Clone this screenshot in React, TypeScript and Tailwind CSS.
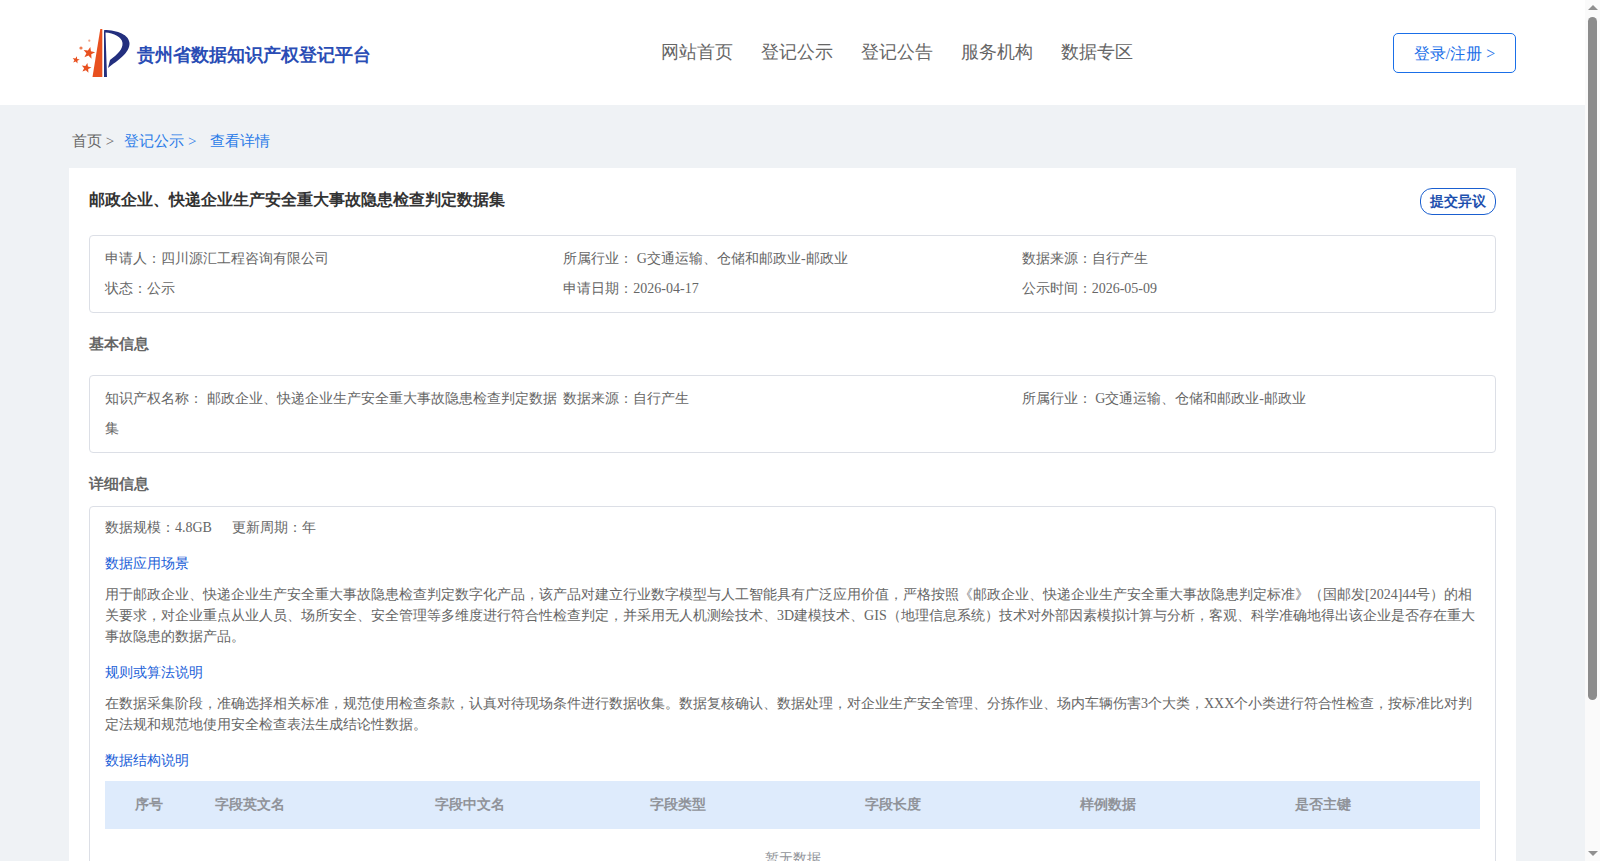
const columns = ["字段英文名", "字段中文名", "字段类型", "字段长度", "样例数据", "是否主键"];

function star(cx: number, cy: number, r: number) {
  const pts: string[] = [];
  for (let i = 0; i < 10; i++) {
    const rad = i % 2 === 0 ? r : r * 0.42;
    const a = ((i * 36 - 78) * Math.PI) / 180;
    pts.push(`${(cx + rad * Math.cos(a)).toFixed(2)},${(cy + rad * Math.sin(a)).toFixed(2)}`);
  }
  return pts.join(" ");
}

function Logo() {
  return (
    <svg width="60" height="52" viewBox="0 0 60 52" className="shrink-0">
      <path d="M28.300 2H30.300V50H20.500Z" fill="#e8501f" />
      <path d="M32 3C46 3 57 8 57.500 16C58 26 46 33 36 41L38 33C46 27 51 22 50.500 16C50 10 42 6 33 5.500Z" fill="#232f7e" />
      <path d="M32 3L33.500 5.500L35 50H32Z" fill="#232f7e" />
      <polygon points={star(17, 26, 6.2)} fill="#e8501f" />
      <polygon points={star(4, 33, 3.8)} fill="#e8501f" />
      <polygon points={star(14.300, 41, 5.2)} fill="#e8501f" />
      <circle cx="9" cy="21" r="1.600" fill="#ee7b52" />
      <circle cx="17.300" cy="13.700" r="1.100" fill="#f0a184" />
    </svg>
  );
}

function Header() {
  return (
    <header className="flex h-[105px] items-center bg-white pl-[72px] pr-[69px]">
      <div className="flex w-[589px] items-center gap-[5px]">
        <Logo />
        <span className="pt-[6px] text-[18px] font-bold text-[#2a4db5]">贵州省数据知识产权登记平台</span>
      </div>
      <nav className="flex flex-1 gap-[28px] text-[18px] text-[#666666]">
        <span>网站首页</span>
        <span>登记公示</span>
        <span>登记公告</span>
        <span>服务机构</span>
        <span>数据专区</span>
      </nav>
      <button className="h-[40px] w-[123px] rounded-[5px] border border-[#1a6fe8] pt-[2px] text-[16px] text-[#1a6fe8]">
        登录/注册 &gt;
      </button>
    </header>
  );
}

function Scrollbar() {
  return (
    <div className="fixed right-0 top-0 flex h-[861px] w-[15px] flex-col items-center bg-[#fafafa]">
      <div className="mt-[5px] h-0 w-0 border-x-[5px] border-b-[5px] border-x-transparent border-b-[#8f8f8f]" />
      <div className="mt-[7px] h-[683px] w-[9px] rounded-[5px] bg-[#8c8c8c]" />
      <div className="mt-auto mb-[5px] h-0 w-0 border-x-[5px] border-t-[5px] border-x-transparent border-t-[#8f8f8f]" />
    </div>
  );
}

function InfoItem({ children }: { children: React.ReactNode }) {
  return <div className="leading-[30px]">{children}</div>;
}

function App() {
  return (
    <div className="min-h-[1042px] w-[1585px] bg-[#eff2f5] font-['Liberation_Serif',serif] text-[14px] text-[#666666]">
      <Header />
      <Scrollbar />

      <div className="flex h-[63px] items-center pl-[72px] pt-[10px] text-[15px]">
        <span>首页 &gt;</span>
        <span className="ml-[10px] text-[#2a7be8]">登记公示 &gt;</span>
        <span className="ml-[14px] text-[#2a7be8]">查看详情</span>
      </div>

      <main className="mx-[69px] bg-white px-[20px] pb-[30px] pt-[20px]">
        <div className="flex items-start justify-between">
          <h1 className="text-[16px] leading-[24px] font-bold text-[#333333]">邮政企业、快递企业生产安全重大事故隐患检查判定数据集</h1>
          <button className="h-[27px] w-[76px] rounded-[12px] border border-[#1a5fd0] text-[14px] font-bold text-[#1e50ae]">提交异议</button>
        </div>

        <div className="mt-[20px] grid grid-cols-3 rounded-[4px] border border-[#dcdfe6] px-[15px] py-[8px]">
          <InfoItem>申请人：四川源汇工程咨询有限公司</InfoItem>
          <InfoItem>所属行业： G交通运输、仓储和邮政业-邮政业</InfoItem>
          <InfoItem>数据来源：自行产生</InfoItem>
          <InfoItem>状态：公示</InfoItem>
          <InfoItem>申请日期：2026-04-17</InfoItem>
          <InfoItem>公示时间：2026-05-09</InfoItem>
        </div>

        <h2 className="mt-[19px] text-[15px] leading-[24px] font-bold">基本信息</h2>

        <div className="mt-[19px] grid grid-cols-3 rounded-[4px] border border-[#dcdfe6] px-[15px] py-[8px]">
          <div className="pr-[6px] leading-[30px]">知识产权名称： 邮政企业、快递企业生产安全重大事故隐患检查判定数据集</div>
          <InfoItem>数据来源：自行产生</InfoItem>
          <InfoItem>所属行业： G交通运输、仓储和邮政业-邮政业</InfoItem>
        </div>

        <h2 className="mt-[19px] text-[15px] leading-[24px] font-bold">详细信息</h2>

        <div className="mt-[10px] rounded-[4px] border border-[#dcdfe6] px-[15px] pb-[20px] pt-[10px]">
          <div className="flex gap-[20px] leading-[21px]">
            <span>数据规模：4.8GB</span>
            <span>更新周期：年</span>
          </div>

          <h3 className="mt-[15px] leading-[21px] text-[#1a60d8]">数据应用场景</h3>
          <p className="mt-[10px] leading-[21px]">
            用于邮政企业、快递企业生产安全重大事故隐患检查判定数字化产品，该产品对建立行业数字模型与人工智能具有广泛应用价值，严格按照《邮政企业、快递企业生产安全重大事故隐患判定标准》（国邮发[2024]44号）的相关要求，对企业重点从业人员、场所安全、安全管理等多维度进行符合性检查判定，并采用无人机测绘技术、3D建模技术、GIS（地理信息系统）技术对外部因素模拟计算与分析，客观、科学准确地得出该企业是否存在重大事故隐患的数据产品。
          </p>

          <h3 className="mt-[15px] leading-[21px] text-[#1a60d8]">规则或算法说明</h3>
          <p className="mt-[10px] leading-[21px]">
            在数据采集阶段，准确选择相关标准，规范使用检查条款，认真对待现场条件进行数据收集。数据复核确认、数据处理，对企业生产安全管理、分拣作业、场内车辆伤害3个大类，XXX个小类进行符合性检查，按标准比对判定法规和规范地使用安全检查表法生成结论性数据。
          </p>

          <h3 className="mt-[15px] leading-[21px] text-[#1a60d8]">数据结构说明</h3>
          <div className="mt-[10px] grid h-[48px] grid-cols-[88px_220px_repeat(4,215px)_1fr] items-center bg-[#deebfc] pb-[2px] font-bold text-[#909399]">
            <span className="text-center">序号</span>
            {columns.map((name) => (
              <span key={name} className="pl-[22px]">{name}</span>
            ))}
          </div>
          <div className="pt-[19px] text-center leading-[21px] text-[#909399]">暂无数据</div>
        </div>
      </main>
    </div>
  );
}

export default App;
